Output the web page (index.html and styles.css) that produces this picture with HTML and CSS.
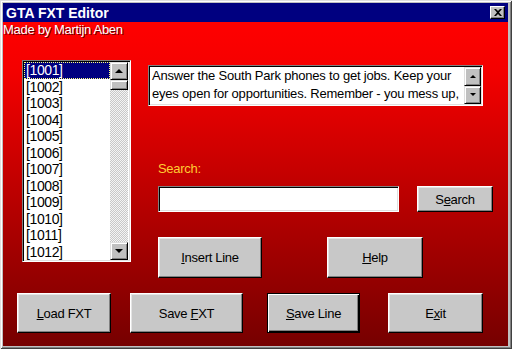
FILE: index.html
```html
<!DOCTYPE html>
<html>
<head>
<meta charset="utf-8">
<title>GTA FXT Editor</title>
<link rel="stylesheet" href="styles.css">
</head>
<body>
<div class="window">
  <div class="titlebar">
    <span class="title">GTA FXT Editor</span>
    <span class="close">
      <svg width="8" height="7" viewBox="0 0 8 7"><path d="M0 0h2l2 2 2-2h2L5 3.5 8 7H6L4 5 2 7H0l3-3.5z" fill="#000"/></svg>
    </span>
  </div>
  <div class="client">
    <div class="credit">Made by Martijn Aben</div>
    <div class="main">
      <div class="listbox">
        <ul class="items">
          <li class="selected"><span>[1001]</span></li>
          <li><span>[1002]</span></li>
          <li><span>[1003]</span></li>
          <li><span>[1004]</span></li>
          <li><span>[1005]</span></li>
          <li><span>[1006]</span></li>
          <li><span>[1007]</span></li>
          <li><span>[1008]</span></li>
          <li><span>[1009]</span></li>
          <li><span>[1010]</span></li>
          <li><span>[1011]</span></li>
          <li><span>[1012]</span></li>
        </ul>
        <div class="vscroll">
          <div class="sbtn"><span class="tri-up"></span></div>
          <div class="thumb"></div>
          <div class="track"></div>
          <div class="sbtn"><span class="tri-down"></span></div>
        </div>
      </div>
      <div class="right">
        <div class="memo">
          <div class="memo-text">Answer the South Park phones to get jobs. Keep your<br>eyes open for opportunities. Remember - you mess up,</div>
          <div class="memo-scroll">
            <div class="sbtn small"><span class="tri-up sm"></span></div>
            <div class="sbtn small"><span class="tri-down sm"></span></div>
          </div>
        </div>
        <div class="search-label">Search:</div>
        <div class="search-row">
          <div class="edit"></div>
          <div class="btn btn-search"><span>S<u>e</u>arch</span></div>
        </div>
        <div class="action-row">
          <div class="btn btn-insert"><span><u>I</u>nsert Line</span></div>
          <div class="btn btn-help"><span><u>H</u>elp</span></div>
        </div>
      </div>
    </div>
    <div class="bottom-row">
      <div class="btn btn-load"><span><u>L</u>oad FXT</span></div>
      <div class="btn btn-savefxt"><span>Save <u>F</u>XT</span></div>
      <div class="btn btn-saveline default"><span><u>S</u>ave Line</span></div>
      <div class="btn btn-exit"><span>E<u>x</u>it</span></div>
    </div>
  </div>
</div>
</body>
</html>
```

FILE: styles.css
```css
* { box-sizing: border-box; }
html, body { margin: 0; padding: 0; }
body {
  width: 512px;
  height: 349px;
  overflow: hidden;
  font-family: "Liberation Sans", Arial, sans-serif;
  font-size: 13px;
  background: #c0c0c0;
}
.window {
  width: 512px;
  height: 349px;
  background: #c0c0c0;
  padding: 3px 4px 3px 3px;
  box-shadow: inset 1px 1px #dfdfdf, inset -1px -1px #404040, inset 2px 2px #fff, inset -2px -2px #808080;
  display: flex;
  flex-direction: column;
}
.titlebar {
  height: 19px;
  background: #000080;
  display: flex;
  align-items: center;
  justify-content: space-between;
  padding: 0 3px 0 3px;
}
.title {
  color: #fff;
  font-weight: bold;
  font-size: 14px;
}
.close {
  width: 15px;
  height: 13px;
  background: #c0c0c0;
  border: 1px solid;
  border-color: #fff #000 #000 #fff;
  box-shadow: inset -1px -1px #808080;
  display: flex;
  align-items: center;
  justify-content: center;
}
.close svg { display: block; }
.client {
  flex: 1;
  background: linear-gradient(#ff0000 0%, #f40000 15%, #c00000 50%, #760000 100%);
  display: flex;
  flex-direction: column;
}
.credit {
  color: #fff;
  height: 16px;
  line-height: 16px;
  padding-left: 0;
  letter-spacing: -0.3px;
  text-shadow: 1px 1px 0 rgba(60,0,0,0.8);
}
.main {
  display: flex;
  align-items: flex-start;
  margin-top: 22px;
}
.listbox {
  margin-left: 19px;
  width: 109px;
  height: 202px;
  background: #fff;
  border: 1px solid;
  border-color: #808080 #fff #fff #808080;
  box-shadow: inset 1px 1px #000, inset -1px -1px #dfdfdf;
  padding: 1px 2px 1px 1px;
  display: flex;
}
.items {
  list-style: none;
  margin: 0;
  padding: 0;
  flex: 1;
}
.items li {
  height: 16.5px;
  line-height: 16.5px;
  padding: 0 0 0 2px;
  font-size: 14px;
  letter-spacing: -0.4px;
  color: #000;
}
.items li.selected {
  background: #000080;
  color: #fff;
  outline: 1px dotted #ffff80;
  outline-offset: -1px;
}
.vscroll {
  width: 18px;
  display: flex;
  flex-direction: column;
}
.sbtn {
  width: 18px;
  height: 18px;
  background: #c0c0c0;
  border: 1px solid;
  border-color: #dfdfdf #000 #000 #dfdfdf;
  box-shadow: inset 1px 1px #fff, inset -1px -1px #808080;
  display: flex;
  align-items: center;
  justify-content: center;
}
.thumb {
  height: 10px;
  background: #c0c0c0;
  border: 1px solid;
  border-color: #dfdfdf #000 #000 #dfdfdf;
  box-shadow: inset 1px 1px #fff, inset -1px -1px #808080;
}
.track {
  flex: 1;
  background: repeating-conic-gradient(#c8c8c8 0 25%, #f4f4f4 0 50%) 0 0 / 2px 2px;
}
.tri-up, .tri-down {
  width: 0;
  height: 0;
  border-left: 4px solid transparent;
  border-right: 4px solid transparent;
}
.tri-up { border-bottom: 4px solid #000; }
.tri-down { border-top: 4px solid #000; }
.tri-up.sm, .tri-down.sm { border-left-width: 3px; border-right-width: 3px; }
.tri-up.sm { border-bottom-width: 3px; }
.tri-down.sm { border-top-width: 3px; }
.right {
  margin-left: 17px;
  display: flex;
  flex-direction: column;
}
.memo {
  margin-top: 5px;
  width: 335px;
  height: 41px;
  background: #fff;
  border: 1px solid;
  border-color: #808080 #fff #fff #808080;
  box-shadow: inset 1px 1px #000, inset -1px -1px #dfdfdf;
  padding: 1px 1px 1px 2px;
  display: flex;
}
.memo-text {
  flex: 1;
  color: #000;
  font-size: 13px;
  line-height: 18px;
  padding-left: 1px;
  letter-spacing: -0.2px;
  white-space: nowrap;
  overflow: hidden;
}
.memo-scroll {
  width: 17px;
  display: flex;
  flex-direction: column;
}
.sbtn.small {
  width: 17px;
  height: 19px;
}
.search-label {
  margin-top: 55px;
  margin-left: 10px;
  color: #ffcc33;
  height: 15px;
  line-height: 15px;
  letter-spacing: -0.3px;
}
.search-row {
  margin-top: 10px;
  margin-left: 10px;
  display: flex;
  gap: 18px;
}
.edit {
  width: 241px;
  height: 26px;
  background: #fff;
  border: 1px solid;
  border-color: #808080 #fff #fff #808080;
  box-shadow: inset 1px 1px #000, inset -1px -1px #dfdfdf;
}
.btn {
  background: #c8c8c8;
  border: 1px solid;
  border-color: #fff #000 #000 #fff;
  box-shadow: inset -1px -1px #808080, inset 1px 1px #e4e4e4;
  color: #000;
  display: flex;
  align-items: center;
  justify-content: center;
  letter-spacing: -0.3px;
  font-size: 13px;
  white-space: nowrap;
}
.btn.default {
  border: 1px solid #000;
  box-shadow: inset 1px 1px #fff, inset -1px -1px #000, inset -2px -2px #808080;
}
.btn-search { width: 76px; height: 26px; }
.action-row {
  margin-top: 25px;
  margin-left: 10px;
  display: flex;
  gap: 65px;
}
.btn-insert { width: 104px; height: 41px; }
.btn-help { width: 96px; height: 41px; }
.bottom-row {
  margin-top: 15px;
  padding-left: 14px;
  display: flex;
}
.bottom-row .btn { height: 40px; }
.btn-load { width: 94px; }
.btn-savefxt { width: 113px; margin-left: 19px; }
.btn-saveline { width: 93px; margin-left: 24px; }
.btn-exit { width: 95px; margin-left: 28px; }
```
